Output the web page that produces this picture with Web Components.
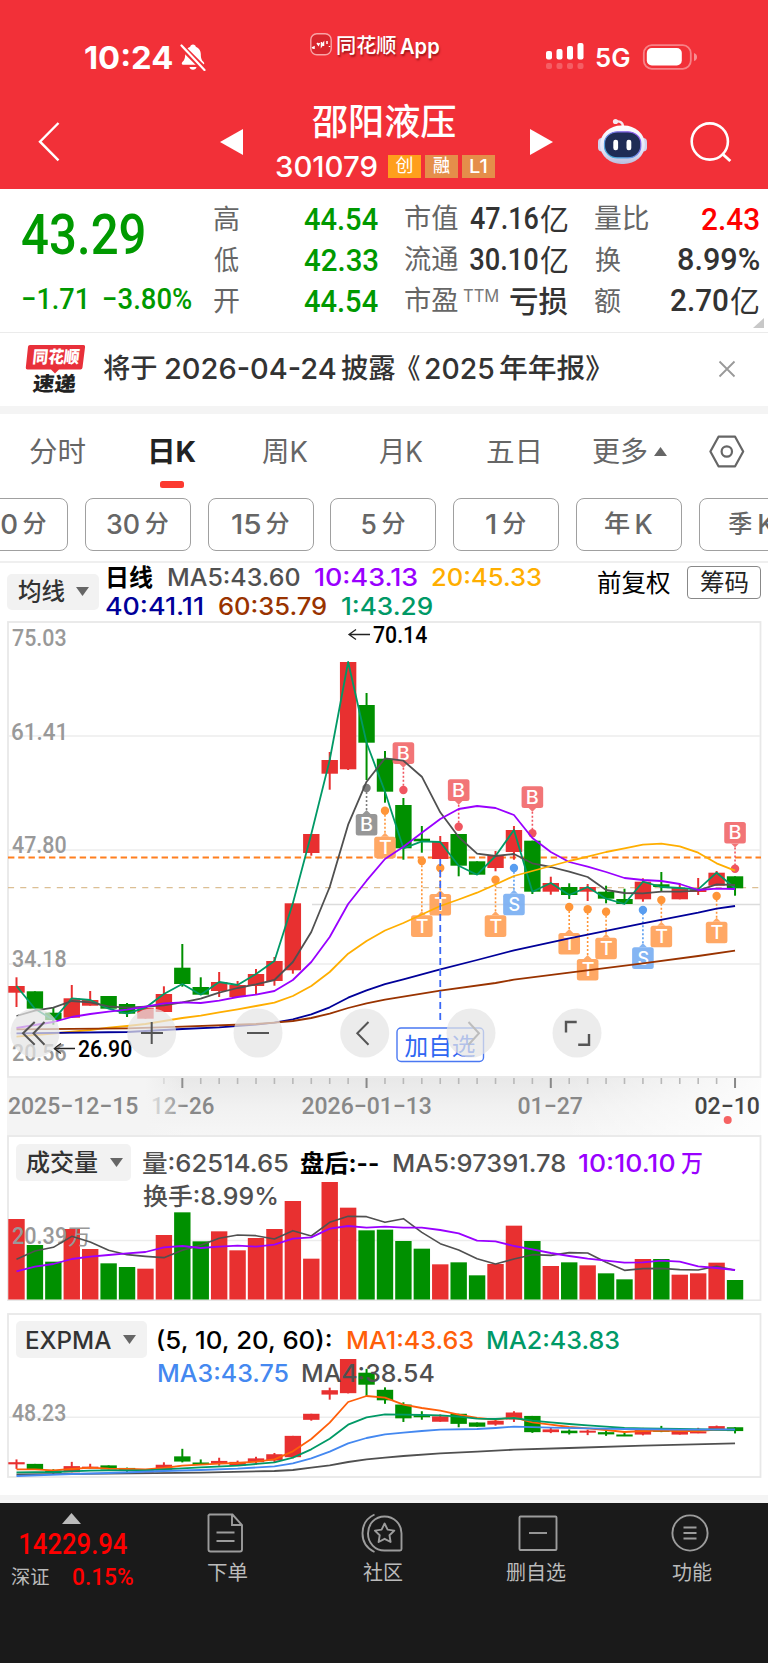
<!DOCTYPE html>
<html lang="zh-CN">
<head>
<meta charset="utf-8">
<title>邵阳液压 301079</title>
<style>
html,body{margin:0;padding:0;background:#fff}
body{width:768px;font-family:"Inter","Noto Sans CJK SC",sans-serif;color:#333;overflow-x:hidden}
</style>
</head>
<body>
<stock-page></stock-page>
<script>
const UI='Inter, "Noto Sans CJK SC", sans-serif', NUM='Roboto, "Noto Sans CJK SC", sans-serif';
const pen=document.createElement('canvas').getContext('2d');
function ink(text,size,weight,family){
  pen.font=`${weight} ${size}px ${family}`;
  const m=pen.measureText(text);
  return {left:-m.actualBoundingBoxLeft,width:m.actualBoundingBoxLeft+m.actualBoundingBoxRight};
}
function define(name,html,after){
  const tpl=document.createElement('template');
  tpl.innerHTML=html;
  customElements.define(name,class extends HTMLElement{
    constructor(){super();this.attachShadow({mode:'open'}).append(tpl.content.cloneNode(true));}
    connectedCallback(){if(after)after(this,this.shadowRoot);}
  });
}

/* Text whose glyphs span exactly w pixels. s size, b weight, c colour, g gap before, t space above, num for figures */
customElements.define('fit-text',class extends HTMLElement{
  constructor(){
    super();
    this.attachShadow({mode:'open'}).innerHTML='<style>:host{display:block;flex:none;white-space:pre}span{display:inline-block;transform-origin:0 50%}</style><span><slot></slot></span>';
  }
  connectedCallback(){
    const a=(n,d)=>this.hasAttribute(n)?this.getAttribute(n):d;
    const s=+a('s',24),w=+a('w',50),b=a('b','400'),fam=this.hasAttribute('num')?NUM:UI;
    const k=ink(this.textContent,s,b,fam),sc=w/k.width;
    const st=this.style;
    st.width=w+'px';st.height=s+'px';st.font=`${b} ${s}px/${s}px ${fam}`;
    if(a('c'))st.color=a('c');
    if(a('g'))st.marginLeft=a('g')+'px';
    if(a('t'))st.marginTop=a('t')+'px';
    this.shadowRoot.querySelector('span').style.transform=`translateX(${-k.left*sc}px) scaleX(${sc})`;
  }
});

define('status-bar',`<style>
:host{display:flex;height:94px;align-items:flex-start;color:#fff}
svg{display:block;flex:none}
.app{display:flex;margin-left:103px;text-shadow:1px 2px 2px rgba(90,0,0,.55)}
</style>
<fit-text s="31.5" b="700" w="87" g="85" t="41.500">10:24</fit-text>
<svg width="28" height="28" style="margin:43px 0 0 7px" viewBox="0 0 28 28"><path d="M14 1.500c-1.600 0-2.600 1-2.800 2.200C7.800 5 6.200 7.800 6.200 11c0 5-1.200 6.500-3 8.200-.8.9-.4 2.600.8 2.600h20c1.200 0 1.600-1.700.8-2.600-1.800-1.700-3-3.200-3-8.200 0-3.200-1.600-6-5-7.300C16.600 2.500 15.600 1.500 14 1.500zM10.500 24h7c-.3 1.800-1.700 2.800-3.500 2.800s-3.200-1-3.500-2.800z" fill="#fff"/><path d="M2 3l24 24" stroke="#f13038" stroke-width="6"/><path d="M2.500 2.500l23 24.500" stroke="#fff" stroke-width="2.200" stroke-linecap="round"/></svg>
<div class="app">
<svg width="22" height="23" style="margin-top:33px" viewBox="0 0 22 23"><rect x=".8" y=".8" width="20.400" height="21" rx="6" fill="#d8262e" stroke="#f9a3a5" stroke-width="1.400"/><path d="M2 15l2-1v2M7 10l1.500 2 1-2M11.500 9v4l2-3v3M17 8v3M19.500 13v1" stroke="#fff" stroke-width="1.500" fill="none"/></svg>
<fit-text s="20.500" w="59" b="500" g="5" t="36">同花顺</fit-text><fit-text s="22" w="39" b="600" g="4" t="34.500">App</fit-text></div>
<svg width="40" height="28" style="margin:43px 0 0 105.500px" viewBox="0 0 40 28"><g fill="#fff"><rect x="1" y="8" width="6" height="8.500" rx="2"/><rect x="11.500" y="6" width="6" height="10.500" rx="2"/><rect x="22" y="3" width="6" height="13.500" rx="2"/><rect x="32.500" y="0" width="6" height="16.500" rx="2"/></g><g fill="#fff" opacity=".22"><rect x="1" y="20" width="6" height="6" rx="2"/><rect x="11.500" y="20" width="6" height="6" rx="2"/><rect x="22" y="20" width="6" height="6" rx="2"/><rect x="32.500" y="20" width="6" height="6" rx="2"/></g></svg>
<fit-text s="26" b="600" w="34" g="11" t="45">5G</fit-text>
<svg width="56" height="28" style="margin:43px 0 0 12px" viewBox="0 0 56 28"><rect x="1.800" y="2.200" width="47" height="23.600" rx="8" fill="none" stroke="#fff" stroke-opacity=".4" stroke-width="1.800"/><rect x="4.800" y="5" width="35" height="17.500" rx="5" fill="#fff"/><path d="M52 10q3 1 3 4t-3 4z" fill="#fff" opacity=".45"/></svg>`);

define('stock-header',`<style>
:host{display:flex;height:94px;color:#fff}
svg{display:block;flex:none}
.mid{display:flex;flex-direction:column;width:222px;margin-left:32px}
.row{display:flex;margin-top:14.500px}
.tag{display:flex;box-sizing:border-box;width:33px;height:23px;margin-left:4px;background:#e58e4a;align-items:center;justify-content:center}
.tag.first{margin-left:11px;background:#ff9f1c}
</style>
<svg width="24" height="42" style="margin:27px 0 0 37px" viewBox="0 0 24 42"><path d="M21.500 2L3 20.700l18.500 18.700" fill="none" stroke="#fff" stroke-width="2.400"/></svg>
<svg width="23" height="26" style="margin:35px 0 0 159px" viewBox="0 0 23 26"><path d="M0 13L23 0v26z" fill="#fff"/></svg>
<div class="mid">
<fit-text s="36.500" w="144" g="36.500" t="9.500" b="500">邵阳液压</fit-text>
<div class="row"><fit-text s="28.500" w="101" b="500" g=".5" t="-2">301079</fit-text>
<div class="tag first"><fit-text s="18" w="17">创</fit-text></div><div class="tag"><fit-text s="18" w="17" b="500">融</fit-text></div><div class="tag"><fit-text s="18.500" w="17" b="500">L1</fit-text></div></div>
</div>
<svg width="23" height="26" style="margin:35px 0 0 33px" viewBox="0 0 23 26"><path d="M23 13L0 0v26z" fill="#fff"/></svg>
<svg width="52" height="48" style="margin:24px 0 0 43px" viewBox="0 0 52 48">
<defs><linearGradient id="shell" x1="0" y1="0" x2="0" y2="1"><stop offset="0" stop-color="#fff"/><stop offset=".65" stop-color="#e3e4f6"/><stop offset="1" stop-color="#b9bddd"/></linearGradient><linearGradient id="rim" x1="0" y1="1" x2="1" y2="0"><stop offset="0" stop-color="#3fb8d8"/><stop offset="1" stop-color="#9a50f0"/></linearGradient></defs>
<path d="M19 4c4-1.500 8 0 8 5" stroke="#f5e7ef" stroke-width="2.400" fill="none"/><circle cx="19.500" cy="3.500" r="2.600" fill="#f5e7f0"/>
<rect x="2" y="20" width="8" height="13.500" rx="4" fill="#cfd2ee"/><rect x="43" y="20" width="8" height="13.500" rx="4" fill="#cfd2ee"/>
<rect x="4.200" y="7.500" width="44.600" height="38.500" rx="21" ry="18.500" fill="url(#shell)"/><rect x="8.500" y="13.800" width="36.300" height="26" rx="13" ry="11.500" fill="#1f2c55" stroke="url(#rim)" stroke-width="1.200"/><rect x="17.300" y="21.800" width="4.800" height="10.500" rx="2.200" fill="#fff"/><rect x="30.500" y="21.800" width="4.800" height="10.500" rx="2.200" fill="#fff"/></svg>
<svg width="44" height="44" style="margin:26px 0 0 40px" viewBox="0 0 44 44"><circle cx="21.800" cy="21.500" r="18.100" fill="none" stroke="#fff" stroke-width="2.600"/><path d="M34 33.500l8.300 7.500" stroke="#fff" stroke-width="3"/></svg>`);

define('quote-board',`<style>
:host{display:flex;height:142.500px;border-bottom:1.500px solid #ebebeb;position:relative;color:#333}
.p{display:flex;flex-direction:column;width:192px;margin-left:22px}
.ch{display:flex;margin-top:22.500px}
.col{display:flex;flex-direction:column;padding-top:9px}
.col>div{display:flex;height:41px;align-items:center;justify-content:space-between}
.n{display:flex;align-items:center}
svg{position:absolute;right:4px;bottom:4px}
</style>
<div class="p"><fit-text num s="56" w="122" b="500" c="#090" t="18">43.29</fit-text>
<div class="ch"><fit-text num s="29" w="62" c="#090" b="500" g="1" t="-1">−1.71</fit-text><fit-text num s="29" w="88" c="#090" b="500" g="19" t="-1">−3.80%</fit-text></div></div>
<div class="col" style="width:164px">
<div><fit-text s="27" w="25" c="#666" t="1">高</fit-text><fit-text num s="32" w="74" c="#090" b="500">44.54</fit-text></div>
<div><fit-text s="27" w="25" c="#666" t="1">低</fit-text><fit-text num s="32" w="74" c="#090" b="500">42.33</fit-text></div>
<div><fit-text s="27" w="25" c="#666" t="1">开</fit-text><fit-text num s="32" w="74" c="#090" b="500">44.54</fit-text></div></div>
<div class="col" style="width:163px;margin-left:27px">
<div><fit-text s="27.500" w="53" c="#666" t="1">市值</fit-text><span class="n"><fit-text num s="31.500" w="68" b="500">47.16</fit-text><fit-text s="30" w="28" g="2">亿</fit-text></span></div>
<div><fit-text s="27.500" w="53" c="#666" t="1">流通</fit-text><span class="n"><fit-text num s="31.500" w="68" b="500">30.10</fit-text><fit-text s="30" w="28" g="2">亿</fit-text></span></div>
<div><fit-text s="27.500" w="53" c="#666" t="1">市盈</fit-text><fit-text s="17" w="35" c="#777" t="-9" style="margin-right:7px">TTM</fit-text><fit-text s="30" w="58" b="500">亏损</fit-text></div></div>
<div class="col" style="width:164px;margin-left:27px">
<div><fit-text s="27.500" w="53" c="#666" t="1">量比</fit-text><fit-text num s="32" w="57" c="#f00" b="500">2.43</fit-text></div>
<div><fit-text s="27" w="26" c="#666" t="1">换</fit-text><fit-text num s="31.500" w="81" b="500">8.99%</fit-text></div>
<div><fit-text s="27" w="26" c="#666" t="1">额</fit-text><span class="n"><fit-text num s="31.500" w="57" b="500">2.70</fit-text><fit-text s="30" w="29" g="2">亿</fit-text></span></div></div>
<svg width="11" height="10"><path d="M11 0v10H0z" fill="#c8c8c8"/></svg>`);

define('news-strip',`<style>
:host{display:flex;height:73px;align-items:center;border-bottom:8px solid #f4f4f4;color:#333}
svg{display:block;flex:none}
.logo{display:grid;width:61px;height:52px;margin-left:25px;flex:none}
.logo>*{grid-area:1/1}
.logo .a{transform:skewX(-6deg);margin:6px 0 0 7px;color:#fff}
.logo .b{transform:skewX(-6deg);margin:31px 0 0 8px;color:#222}
.line{display:flex;margin-top:1px}
</style>
<div class="logo"><svg width="62" height="34" viewBox="0 0 62 34"><path d="M5 2h53.500q1.800 0 1.600 1.800L57.500 24.500q-.3 2-2 2H34l-4 4-4-4H2.500q-2 0-1.700-2L3 3.800Q3.200 2 5 2z" fill="#e8303a"/></svg><div class="a"><fit-text s="17" w="46" b="900">同花顺</fit-text></div><div class="b"><fit-text s="20" w="43" b="900">速递</fit-text></div></div>
<div class="line"><fit-text s="27.500" w="54" b="500" g="17">将于</fit-text><fit-text s="28.500" w="171" b="500" g="7.500">2026-04-24</fit-text><fit-text s="27.500" w="54" b="500" g="5.500">披露</fit-text><fit-text s="27.500" w="12" b="500" g="13">《</fit-text><fit-text s="28.500" w="69" b="500" g="5">2025</fit-text><fit-text s="27.500" w="100" b="500" g="6">年年报》</fit-text></div>
<svg width="18" height="18" style="margin-left:118px" viewBox="0 0 18 18"><path d="M1.500 1.500l15 15M16.500 1.500l-15 15" stroke="#999" stroke-width="1.800"/></svg>`);

define('period-tabs',`<style>
:host{display:flex;height:76px;color:#666;align-items:flex-start}
.on{display:flex;flex-direction:column}
i{display:block;width:24px;height:6.500px;border-radius:2.500px;background:#fc3a30;margin:15.500px 0 0 9px}
svg{display:block;flex:none}
</style>
<fit-text s="28" w="55" g="30" t="24">分时</fit-text>
<div class="on" style="margin-left:66px"><fit-text s="28" w="45" b="700" c="#222" t="24">日K</fit-text><i></i></div>
<fit-text s="28" w="46" g="66" t="24">周K</fit-text><fit-text s="28" w="44" g="71" t="24">月K</fit-text><fit-text s="28" w="52" g="64" t="24">五日</fit-text><fit-text s="28" w="54" g="54" t="24">更多</fit-text>
<svg width="13" height="9" style="margin:33px 0 0 7px"><path d="M6.500 0L13 9H0z" fill="#666"/></svg>
<svg width="36" height="33" style="margin:21px 0 0 42px" viewBox="0 0 36 33"><path d="M9.500 1.700h16.600L34.200 16.500 26.100 31.300H9.500L1.400 16.500z" fill="none" stroke="#666" stroke-width="2.200" stroke-linejoin="round"/><circle cx="17.800" cy="16.500" r="5.200" fill="none" stroke="#666" stroke-width="2.200"/></svg>`);

define('period-chip',`<style>
:host{display:flex;flex:none;box-sizing:border-box;width:106px;height:53px;border:1.500px solid #a0a0a0;border-radius:8px;align-items:center;justify-content:center;color:#666}
</style><slot></slot>`);
define('period-chips',`<style>
:host{display:flex;height:63px;padding-top:8px;gap:16.800px;overflow:hidden;border-bottom:2px solid #efefef}
period-chip:first-of-type{margin-left:-38px}
</style>
<period-chip><fit-text s="26.500" w="33" b="500">60</fit-text><fit-text s="24" w="24" g="6" b="500">分</fit-text></period-chip>
<period-chip><fit-text s="26.500" w="32" b="500">30</fit-text><fit-text s="24" w="24" g="6" b="500">分</fit-text></period-chip>
<period-chip><fit-text s="26.500" w="28" b="500">15</fit-text><fit-text s="24" w="24" g="6" b="500">分</fit-text></period-chip>
<period-chip><fit-text s="26.500" w="14" b="500">5</fit-text><fit-text s="24" w="24" g="6" b="500">分</fit-text></period-chip>
<period-chip><fit-text s="26.500" w="9" b="500">1</fit-text><fit-text s="24" w="24" g="7" b="500">分</fit-text></period-chip>
<period-chip><fit-text s="24" w="24" b="500">年</fit-text><fit-text s="26.500" w="16" g="7" b="500">K</fit-text></period-chip>
<period-chip><fit-text s="24" w="24" b="500">季</fit-text><fit-text s="26.500" w="16" g="7" b="500">K</fit-text></period-chip>`);

define('drop-pill',`<style>
:host{display:flex;flex:none;box-sizing:border-box;height:36.500px;background:#f2f2f2;border-radius:5px;align-items:center;justify-content:space-between;padding:0 9px 0 10.500px;color:#333}
svg{display:block}
</style><slot></slot><svg width="13" height="9"><path d="M0 0h13L6.500 9z" fill="#666"/></svg>`);

define('indicator-bar',`<style>
:host{display:flex;height:58px;align-items:flex-start}
.ma{display:flex;flex-direction:column;width:450px;margin-left:7px}
.ma div{display:flex}
.box{display:flex;box-sizing:border-box;width:74px;height:33px;margin:3.500px 0 0 17px;border:1.500px solid #888;border-radius:4px;align-items:center;justify-content:center}
</style>
<drop-pill style="width:92px;margin:11px 0 0 7px;padding-right:10px"><fit-text s="24" w="47" b="500" t="1">均线</fit-text></drop-pill>
<div class="ma"><div style="margin-top:3.500px"><fit-text s="24" w="45" b="700" c="#000" g="1.500">日线</fit-text><fit-text s="24" w="132" b="500" c="#505050" g="15.500">MA5:43.60</fit-text><fit-text s="24" w="102" b="500" c="#90f" g="15">10:43.13</fit-text><fit-text s="24" w="109" b="500" c="#ffae00" g="15">20:45.33</fit-text></div>
<div style="margin-top:4.500px"><fit-text s="24" w="97" b="500" c="#009">40:41.11</fit-text><fit-text s="24" w="107" b="500" c="#930" g="16">60:35.79</fit-text><fit-text s="24" w="90" b="500" c="#096" g="15.500">1:43.29</fit-text></div></div>
<fit-text s="24.500" w="72" c="#000" g="42" t="8">前复权</fit-text><div class="box"><fit-text s="24" w="47" c="#222">筹码</fit-text></div>`);

/* ---- chart drawing ---- */
const X=i=>16.500+i*18.424;
const UP='#e83030',DOWN='#009000';
/* direction, body top, body bottom, high, low */
const K=[['R',986,992.7,977.3,1007],['G',991.3,1008.7],['G',1012.7,1020,1008,1024.7],['R',998.3,1017.7,985],['R',1000,1005.7,991],['G',996,1008.7],['G',1004,1013.7,1003,1017],['R',1007.7,1018.7],['R',994,1012,986.3],['G',967.7,984,944,986.7],['G',987,994.7,977.3],['R',982,991,972,997],['R',985,997,981],['R',974,986,969,994],['R',961,981,957,985.7],['R',903.3,970.3,903.3,973.7],['R',834,853,834,855.7],['R',760,773.7,752,789.7],['R',662,769.3,662,770],['G',705,742.7,693,780],['G',758.7,791.7,751,802.7],['G',805,848.3,798,859.7],['G',838.7,841.3,826,852.7],['R',842,859,836],['G',834,865.7,834,876.3],['G',861.3,874.7],['R',856,868,851,871.3],['R',830,852,826,859.7],['G',840.7,891.7,840.7,894],['R',883,891.7,876.7,894.7],['G',887,895,883.3,899],['R',887,891.7,884,901],['G',891.7,898.7,885.7,903.3],['G',899,904,888.7],['R',881.7,899.3,878.3,901.7],['G',884.3,887,872,891.7],['R',888,899.3,883.3],['R',889.3,892,878,895],['R',872.7,885.7,871],['G',876.3,888.3,876.3,895.7]];
function candles(f){
  return K.map((k,i)=>{const c=k[0]=='R'?UP:DOWN,t=f(k[1]),b=f(k[2]),h=f(k[3]??k[1]),l=f(k[4]??k[2]);
    return `<path d="M${X(i)} ${h}V${l}" stroke="${c}" stroke-width="2"/><rect x="${X(i)-8.2}" y="${t}" width="16.400" height="${Math.max(b-t,2)}" fill="${c}"/>`}).join('');
}
/* pts is either a full list of y values or [index,y] pairs */
function line(pts,c,f=y=>y,w=1.8){
  return `<polyline fill="none" stroke="${c}" stroke-width="${w}" stroke-linejoin="round" points="${pts.map((p,i)=>Array.isArray(p)?X(p[0])+','+f(p[1]):X(i)+','+f(p)).join(' ')}"/>`;
}
function label(t,x,w,y,s,c,b=500,fam=NUM,extra=''){
  const k=ink(t,s,b,fam),sc=w/k.width;
  return `<text transform="translate(${x-k.left*sc} ${y}) scale(${sc} 1)" font-family='${fam}' font-size="${s}" font-weight="${b}" fill="${c}" ${extra}>${t}</text>`;
}
const hline=(y,x1=9,c='#ededed',w=1.5)=>`<path d="M${x1} ${y}H760" stroke="${c}" stroke-width="${w}"/>`;
const svg=(y,h,body)=>`<svg width="768" height="${h}" viewBox="0 ${y} 768 ${h}">${body}</svg>`;
const CSS='<style>:host{display:grid}svg{display:block;grid-area:1/1}.legend{grid-area:1/1;z-index:1;display:flex;align-items:flex-start}.lines{display:flex;flex-direction:column}.lines div{display:flex}</style>';

const MA5=[1016,1010.7,1007.7,1001,1002.3,1006.3,1007.7,1006.7,1005.3,1002.3,998.7,992.7,988,984.3,980,962,932,887,824.7,781.7,758.3,760.7,776.7,812.3,837,853.7,856,854,863.3,867,871.7,877,890,893,893.3,891.7,891.7,890.7,884.3,885];
const MA10=[1028,1025,1022,1017,1014,1011.7,1009.7,1006.7,1003.3,1002.3,1003,1000.7,997,994.7,991,980,962,937,904,880.7,859,846.7,832.7,819,809,806,808,815,838,852,862,866.7,872,878,880,881,884,890,888.7,889];
const MA20=[[0,1036.7],[2,1033.5],[4,1030],[5,1027.7],[6,1026],[7,1024],[8,1021],[9,1018],[10,1015.7],[11,1012.3],[12,1009.3],[13,1006],[14,1002.7],[15,996],[16,986],[17,972],[18,953.7],[19,941],[20,930.5],[21,923],[22,914.5],[23,906],[24,899.5],[25,892.7],[26,884.5],[27,876],[28,871],[29,866],[30,861],[31,856.7],[32,852],[33,848.3],[34,844.7],[35,843.7],[36,846.3],[37,852.7],[38,863.3],[39,870.7]];
const MA40=[[0,1033.3],[6,1032],[9,1029],[11,1027.3],[13,1024.7],[14,1022.7],[15,1019.3],[16,1014.3],[17,1007.3],[18,997.7],[19,990.3],[20,984.2],[21,979.3],[23,969.3],[25,960],[27,950.3],[30,938.3],[34,923.3],[37,912.7],[38,908.7],[39,906]];
const MA60=[[0,1029.3],[6,1028.3],[9,1026.7],[13,1024],[14,1022.7],[15,1021],[16,1018],[17,1013.7],[18,1008],[19,1003.3],[20,999.7],[23,990.7],[26,983],[27,979.7],[30,972.7],[34,963.3],[37,956],[39,950.7]];
const TONE={g:['#939393','#7c7c7c'],o:['#ffa55f','#ff9538'],r:['#f27072','#f05560'],b:['#7fb2f3','#589df0']};
/* index, letter, tone, badge top, dot y */
const MARKS=[[19,'B','g',814,788],[20,'T','o',836.7,810.7],[21,'B','r',742.3,790],[22,'T','o',915.3,861],[23,'T','o',894,868],[24,'B','r',779.3,826.7],[26,'T','o',915.3,879.7],[27,'S','b',893.7,868],[28,'B','r',786.3,833.3],[30,'T','o',933,907],[31,'T','o',959,909.3],[32,'T','o',937.7,911.7],[34,'S','b',947.3,910],[35,'T','o',925.7,900],[38,'T','o',921.7,896],[39,'B','r',822,868.7]];
function mark([i,ch,t,top,dot]){
  const x=X(i),[bg,c]=TONE[t],above=dot>top,e=above?top+21.5:top,tip=above?e+4:e-4;
  return `<path d="M${x} ${tip}V${dot}" stroke="${c}" stroke-width="1.600" stroke-dasharray="2 2"/><circle cx="${x}" cy="${dot}" r="4.200" fill="${c}"/><g opacity=".96"><rect x="${x-10.8}" y="${top}" width="21.600" height="21.600" rx="2.500" fill="${bg}"/><path d="M${x-4} ${e}h8L${x} ${tip}z" fill="${bg}"/></g>`+label(ch,x-(ch=='T'?6:5.5),ch=='T'?12:11,top+17.2,18,'#fff',500,UI);
}
const close=K.map(k=>k[0]=='R'?k[1]:k[2]);
const arrow=(x,y)=>`<path d="M${x+21} ${y}H${x}M${x+7} ${y-5}L${x} ${y}l7 5" fill="none" stroke="#222" stroke-width="1.300"/>`;
function tool(cx,d,c='#555',w=2){return `<circle cx="${cx}" cy="1033" r="24.500" fill="#e4e4e4" fill-opacity=".72"/><path d="${d}" fill="none" stroke="${c}" stroke-width="${w}"/>`}

define('kline-chart',CSS+svg(621,457,
 `<rect x="8" y="622" width="752.500" height="455" fill="#fff" stroke="#e8e8e8" stroke-width="1.800"/>`
 +hline(736)+hline(850)+hline(964)+hline(904.5,312,'#dcdcdc')
 +`<path d="M8 857.500H761" stroke="#ff7f1f" stroke-width="1.800" stroke-dasharray="6.400 3.840"/><path d="M8 887.600H761" stroke="#dcbf94" stroke-width="1.300" stroke-dasharray="6.100 6.100"/>`
 +label('75.03',12,54,646,24,'#999')+label('61.41',12,52,739.5,24,'#999')+label('47.80',12,54,853.3,24,'#999')+label('34.18',12,54,967,24,'#999')+label('20.56',12,54,1061,24,'#999')
 +candles(y=>y)
 +MARKS.map(mark).join('')
 +line(close,'#096')+line(MA5,'#505050')+line(MA10,'#90f')+line(MA20,'#ffae00')+line(MA40,'#009')+line(MA60,'#930')
 +`<path d="M${X(23)} 859V1020" stroke="#3a68f5" stroke-width="1.800" stroke-dasharray="7 4"/><rect x="397" y="1028" width="86.500" height="33.500" rx="4" fill="#fff" stroke="#4a78f2" stroke-width="1.400"/>`
 +label('加自选',404.5,71,1054.5,24,'#2f66f2',400,UI)
 +arrow(349,634.5)+label('70.14',373,54,643,23.5,'#000')+arrow(54,1048.5)+label('26.90',78,54,1057,23.5,'#000')
 +tool(35,'M34.700 1022L23 1033.300l11.700 11.400M44.500 1022L33.500 1033.300l11 11.400')
 +tool(151.7,'M141 1033h22M151.700 1022v22')+tool(258,'M247 1033h22')
 +tool(364.7,'M368.500 1022L357.300 1033.300l11.200 11.400')+tool(471,'M468.500 1022l10.500 11.300-10.500 11.400','#bdbdbd')
 +tool(577,'M566 1032.500V1022h10.700M589 1034v10.800h-10.800','#555',2.4)));

define('date-axis',CSS+svg(1078,57,
 `<defs><linearGradient id="down" x1="0" y1="0" x2="0" y2="1"><stop offset="0" stop-color="#e8e8e8"/><stop offset=".5" stop-color="#f1f1f1"/><stop offset="1" stop-color="#f6f6f6"/></linearGradient><linearGradient id="fade" x1="0" x2="1" y1="0" y2="0"><stop offset="0" stop-color="#fff" stop-opacity="0"/><stop offset="1" stop-color="#fff" stop-opacity=".85"/></linearGradient><linearGradient id="veil" x1="0" x2="1" y1="0" y2="0"><stop offset="0" stop-color="#f4f4f4"/><stop offset="1" stop-color="#f4f4f4" stop-opacity="0"/></linearGradient></defs><rect x="7" y="1078" width="754" height="57" fill="url(#down)"/><rect x="560" y="1078" width="201" height="57" fill="url(#fade)"/>`
 +K.map((k,i)=>i<8?'':i%10==9?`<path d="M${X(i)} 1078v10" stroke="#888" stroke-width="2"/>`:`<path d="M${X(i)} 1078v6" stroke="#b8b8b8" stroke-width="1.600"/>`).join('')
 +label('12−26',152,62,1114,23.5,'#888')
 +'<rect x="7" y="1078" width="138" height="57" fill="#f4f4f4"/><rect x="145" y="1078" width="40" height="57" fill="url(#veil)"/>'
 +label('2025−12−15',8,130,1114,23.5,'#888')+label('2026−01−13',301.5,130,1114,23.5,'#888')+label('01−27',518.5,64,1114,23.5,'#888')+label('02−10',695.5,64,1114,23.5,'#444')
 +'<circle cx="727.700" cy="1120" r="4" fill="#f56262"/>'));

const P=v=>1130+v/3;
const VOL=[267,345,395,297,357,400,411,416,315,247,334,304,361,324,297,213,386,156,233,301,299,333,356,403,397,436,402,287,333,408,397,406,430,448,387,387,434,430,398,450];
define('volume-panel',CSS+svg(1135,166,
 `<rect x="8" y="1136" width="752.500" height="164.300" fill="#fff" stroke="#e8e8e8" stroke-width="1.800"/>`+hline(1240.5)
 +VOL.map((v,i)=>`<rect x="${X(i)-8.2}" y="${P(v)}" width="16.400" height="${1299.5-P(v)}" fill="${K[i][0]=='R'?UP:DOWN}"/>`).join('')
 +label('20.39',12,54,1244,23.5,'#999')+label('万',68,22,1244,22,'#999',400,UI)
 +line([388,363,352,319,336,361,374,379,383,361,346,325,315,317,327,302,318,277,259,260,277,266,307,341,360,386,402,387,374,376,368,369,397,421,416,415,419,420,409,421],'#505050',P,1.6)
 +line([424,410,402,387,380,375,370,366,352,348,354,350,347,350,344,326,322,296,288,293,290,293,293,300,310,332,334,348,358,369,378,386,392,398,397,392,395,409,414,420],'#90f',P))
 +`<div class="legend"><drop-pill style="width:115.500px;margin:9px 0 0 15.500px;padding-right:8px"><fit-text s="24" w="71" b="500" t="1">成交量</fit-text></drop-pill>
 <div class="lines" style="margin-left:11.500px"><div style="margin-top:16.500px"><fit-text s="24" w="145" b="500" c="#505050">量:62514.65</fit-text><fit-text s="24" w="77" b="700" c="#000" g="13">盘后:--</fit-text><fit-text s="24" w="172" b="500" c="#505050" g="15">MA5:97391.78</fit-text><fit-text s="24" w="96" b="500" c="#90f" g="14">10:10.10</fit-text><fit-text s="24" w="21" b="500" c="#90f" g="6">万</fit-text></div><div style="margin-top:9px"><fit-text s="24" w="134" b="500" c="#505050">换手:8.99%</fit-text></div></div></div>`);

define('expma-panel',CSS+svg(1313,165,
 `<rect x="8" y="1314" width="752.500" height="163" fill="#fff" stroke="#e8e8e8" stroke-width="1.800"/>`+hline(1417.3)
 +label('48.23',12,54,1421,23.5,'#999')
 +candles(y=>1359+(y-662)*.3185)
 +line([[0,1033],[5,1031],[10,1028],[14,1023],[15,1020],[16,1013],[17,1006],[18,996],[19,988],[20,983],[21,978],[23,970],[25,965],[27,959],[30,954],[34,947],[39,940]],'#505050',P)
 +line([1018,1018,1021,1017,1013,1016,1017,1018,1014,1007,1004,1001,999,995,988,964,927,878,816,798,803,824,834,842,854,864,869,862,877,884,891,895,900,906,903,902,903,903,899,900],'#ff5f0a',P)
 +line([[0,1027],[2,1026],[4,1022],[5,1021],[7,1021],[9,1015],[10,1012],[12,1007],[14,997],[15,983],[16,958],[17,926],[18,884],[19,862],[20,853],[21,854],[22,855],[23,856],[24,860],[25,866],[26,867],[27,864],[28,872],[29,877],[30,882],[31,886],[32,890],[33,894],[34,895],[36,897],[39,900]],'#096',P)
 +line([[0,1038],[3,1032],[5,1029],[8,1023],[10,1020],[12,1016],[14,1009],[15,1000],[16,985],[17,965],[18,940],[19,924],[20,913],[21,908],[22,903],[23,899],[25,897],[26,894],[27,890],[29,893],[31,895],[33,897],[36,899],[39,898]],'#4488f0',P))
 +`<div class="legend"><drop-pill style="width:131px;margin:8px 0 0 15.500px;padding-right:10.500px"><fit-text s="24.500" w="85" b="500" t="1">EXPMA</fit-text></drop-pill>
 <div class="lines" style="margin-left:11.500px"><div style="margin-top:15.500px"><fit-text s="24" w="174" b="500" c="#000">(5, 10, 20, 60):</fit-text><fit-text s="24" w="126" b="500" c="#ff5f0a" g="14.500">MA1:43.63</fit-text><fit-text s="24" w="132" b="500" c="#096" g="14">MA2:43.83</fit-text></div><div style="margin-top:9px"><fit-text s="24" w="130" b="500" c="#4488f0">MA3:43.75</fit-text><fit-text s="24" w="132" b="500" c="#505050" g="14">MA4:38.54</fit-text></div></div></div>`);

define('nav-item',`<style>:host{display:flex;flex-direction:column;align-items:center;width:80px;flex:none;color:#bbb}::slotted(svg){display:block;fill:none;stroke:#9c9c9c;stroke-width:1.900}</style><slot></slot>`);
define('bottom-bar',`<style>
:host{display:flex;height:160px;background:#1a1a1a;border-top:8px solid #f4f4f4;margin-top:17px}
.idx{width:147px;display:flex;flex-direction:column}
.idx div{display:flex;align-items:center;margin-top:6px}
svg{display:block}
</style>
<div class="idx"><svg width="19" height="11" style="margin:10px 0 0 62px"><path d="M9.500 0L19 11H0z" fill="#bbb"/></svg><fit-text num s="29" w="107" b="500" c="#f00" g="20" t="6">14229.94</fit-text><div><fit-text s="19.500" w="38" c="#bbb" g="11" t="1">深证</fit-text><fit-text num s="24" w="60" b="500" c="#f00" g="24" t="-.5">0.15%</fit-text></div></div>
<nav-item style="margin-left:40px"><svg width="38" height="42" style="margin:9px 4px 0 0" viewBox="0 0 38 42"><path d="M3.500 2.500h23L36 13v24.500a2 2 0 0 1-2 2H4.500a2 2 0 0 1-2-2v-34zM26 2.500V13h10M10.500 20.500h18M10.500 29h18"/></svg><fit-text s="20" w="39" t="8.500">下单</fit-text></nav-item>
<nav-item style="margin-left:76px"><svg width="44" height="42" style="margin:9px 3px 0 0" viewBox="0 0 44 42"><path d="M24.500 4.500c9.500 0 17 7.300 17 16.800V37a1.500 1.500 0 0 1-1.500 1.500H24.500c-9.500 0-16.500-7.500-16.500-17s7-17 16.500-17z"/><path d="M14.500 2.500C7 6 2.500 13 2.500 21.300S7 36.500 14.500 40"/><path d="M24.600 11.500l3 6.100 6.700 1-4.800 4.700 1.100 6.700-6-3.200-6 3.200 1.100-6.700-4.800-4.700 6.700-1z" stroke-linejoin="round"/></svg><fit-text s="20" w="40" t="8.500">社区</fit-text></nav-item>
<nav-item style="margin-left:73px"><svg width="42" height="42" style="margin:9px 0 0 3px" viewBox="0 0 42 42"><rect x="2.500" y="4.500" width="37" height="33.500" rx="1"/><path d="M12 21h18"/></svg><fit-text s="20" w="60" t="8.500">删自选</fit-text></nav-item>
<nav-item style="margin-left:76px"><svg width="42" height="42" style="margin:9px 4px 0 0" viewBox="0 0 42 42"><circle cx="21" cy="21" r="17.600"/><path d="M14.500 15.500h13M14.500 21h13M14.500 26.500h13"/></svg><fit-text s="20" w="40" t="8.500">功能</fit-text></nav-item>`);

define('stock-page',`<style>
:host{display:flex;flex-direction:column;width:768px;height:1663px;overflow:hidden;background:#fff}
header{height:189px;background:#f23038;flex:none}
quote-board,news-strip,period-tabs,period-chips,indicator-bar,kline-chart,date-axis,volume-panel,expma-panel,bottom-bar{flex:none}
indicator-bar{margin-bottom:.5px}
</style>
<header><status-bar></status-bar><stock-header></stock-header></header>
<quote-board></quote-board><news-strip></news-strip><period-tabs></period-tabs><period-chips></period-chips><indicator-bar></indicator-bar>
<kline-chart></kline-chart><date-axis></date-axis><volume-panel></volume-panel><expma-panel style="margin-top:12px"></expma-panel><bottom-bar></bottom-bar>`);
</script>
</body>
</html>
